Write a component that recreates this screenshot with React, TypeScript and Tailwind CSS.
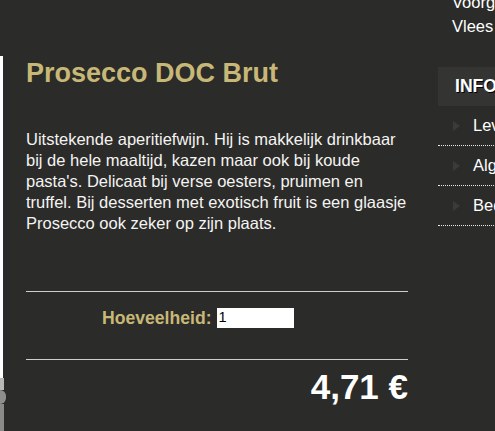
const sideLinks = ['Leveringsvoorwaarden', 'Algemene voorwaarden', 'Bedrijfsgegevens'];

function Arrow() {
  return (
    <svg width="7" height="10" viewBox="0 0 7 10" className="shrink-0">
      <path d="M0 0 L7 5 L0 10 Z" fill="#3b3b39" />
    </svg>
  );
}

export default function App() {
  return (
    <div className="flex h-[431px] w-[495px] overflow-hidden bg-[#2b2b29] font-['Liberation_Sans',Arial,sans-serif] text-white">
      <div className="flex w-[4px] shrink-0 flex-col pt-[56px]">
        <div className="h-[322px] w-[3px] bg-white" />
        <div className="h-[12px] w-[4px] bg-[#b8b8b6]" />
        <div className="h-[14px] w-[6px] rounded-r-full bg-[#8e8e8c]" />
        <div className="flex-1 w-[4px] bg-[#8a8a88]" />
      </div>

      <main className="w-[404px] shrink-0 pl-[22px] pt-[57px]">
        <h1 className="text-[27px] font-bold leading-[32px] text-[#c8b877]">Prosecco DOC Brut</h1>
        <p className="mt-[40px] text-[16.5px] leading-[21px] text-[#f4f4f2]">
          Uitstekende aperitiefwijn. Hij is makkelijk drinkbaar bij de hele maaltijd, kazen maar ook bij koude pasta's. Delicaat bij verse oesters, pruimen en truffel. Bij desserten met exotisch fruit is een glaasje Prosecco ook zeker op zijn plaats.
        </p>

        <div className="mt-[57px] border-t border-[#cfcfcd]" />
        <form className="flex h-[67px] items-start pl-[76px] pt-[16px]">
          <label className="text-[17.6px] font-bold leading-[20px] text-[#c8b877]">Hoeveelheid:</label>
          <input
            defaultValue="1"
            className="ml-[5px] h-[20px] w-[77px] bg-white px-[2px] text-[14.5px] text-black outline-none"
          />
        </form>
        <div className="border-t border-[#cfcfcd]" />
        <div className="mt-[7px] text-right text-[35px] font-bold leading-[40px] text-white">4,71 €</div>
      </main>

      <aside className="ml-[30px] w-[220px] shrink-0">
        <div className="-mt-[10px] pl-[14px] text-[16.5px] leading-[24px]">
          <div>Voorgerechten</div>
          <div>Vlees</div>
        </div>
        <div className="mt-[29px] flex h-[39px] items-center bg-[#343432] pl-[17px] text-[17.6px] font-bold [text-shadow:1px_1px_0_#000]">
          INFO
        </div>
        <ul>
          {sideLinks.map((link) => (
            <li key={link} className="flex h-[40px] items-center gap-[13px] border-b border-dotted border-[#e8e8e6] pl-[15px] text-[16.5px]">
              <Arrow />
              <span>{link}</span>
            </li>
          ))}
        </ul>
      </aside>
    </div>
  );
}
